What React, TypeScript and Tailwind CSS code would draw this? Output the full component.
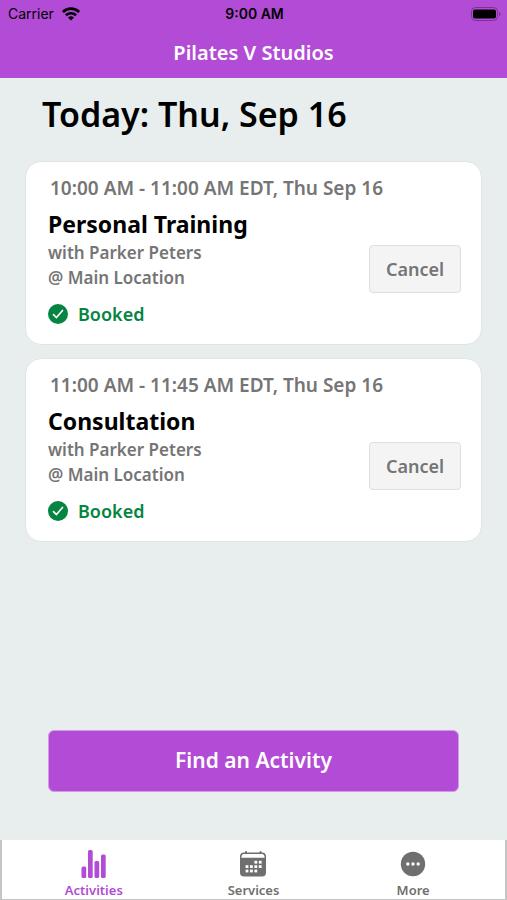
import React from 'react';

type Activity = {
  time: string;
  title: string;
  instructor: string;
  location: string;
};

const activities: Activity[] = [
  {
    time: '10:00 AM - 11:00 AM EDT, Thu Sep 16',
    title: 'Personal Training',
    instructor: 'Parker Peters',
    location: 'Main Location',
  },
  {
    time: '11:00 AM - 11:45 AM EDT, Thu Sep 16',
    title: 'Consultation',
    instructor: 'Parker Peters',
    location: 'Main Location',
  },
];

function WifiIcon() {
  return (
    <svg width="18" height="14" viewBox="0 0 18 14" fill="none" stroke="black" strokeWidth="2.6">
      <path d="M0.900 5a11.500 11.500 0 0 1 16.200 0" />
      <path d="M3.900 8.300a7.300 7.300 0 0 1 10.200 0" />
      <path d="M9 13.600 6 10.600a4.300 4.300 0 0 1 6 0Z" fill="black" stroke="none" />
    </svg>
  );
}

function BatteryIcon() {
  return (
    <svg width="30" height="14" viewBox="0 0 30 14">
      <rect x="0.5" y="0.5" width="26" height="13" rx="4" fill="none" stroke="#7b3291" />
      <rect x="2" y="2.5" width="23" height="9" rx="2" fill="black" />
      <path d="M28 5v4q1.6-.6 1.6-2T28 5Z" fill="#7b3291" />
    </svg>
  );
}

function CheckIcon() {
  return (
    <svg width="20" height="20" viewBox="0 0 20 20">
      <circle cx="10" cy="10" r="10" fill="#058541" />
      <path d="m5.5 10.6 3 3 6-7.2" fill="none" stroke="white" strokeWidth="1.6" strokeLinecap="round" strokeLinejoin="round" />
    </svg>
  );
}

function BarsIcon() {
  return (
    <svg width="28" height="28" viewBox="0 0 28 28" fill="currentColor">
      <rect x="1.500" y="16.500" width="4.700" height="11.500" rx="1.600" />
      <rect x="8" y="0" width="4.700" height="28" rx="1.600" />
      <rect x="14.500" y="11" width="4.700" height="17" rx="1.600" />
      <rect x="21" y="4.500" width="4.700" height="23.500" rx="1.600" />
    </svg>
  );
}

function CalendarIcon() {
  return (
    <svg width="28" height="28" viewBox="0 0 28 28" fill="currentColor">
      <rect x="6" y="1" width="2" height="4" rx="1" />
      <rect x="20.500" y="1" width="2" height="4" rx="1" />
      <path d="M5 2.500h18a4 4 0 0 1 4 4V22.500a4 4 0 0 1-4 4H5a4 4 0 0 1-4-4V6.500a4 4 0 0 1 4-4Z" />
      <path d="M5 4h18q2.500 0 2.700 3.800H2.300Q2.500 4 5 4Z" fill="white" />
      <g fill="white">
        <rect x="15.400" y="10.800" width="2.800" height="2.800" />
        <rect x="19.800" y="10.800" width="2.800" height="2.800" />
        <rect x="6.600" y="15.200" width="2.800" height="2.800" />
        <rect x="11" y="15.200" width="2.800" height="2.800" />
        <rect x="15.400" y="15.200" width="2.800" height="2.800" />
        <rect x="19.800" y="15.200" width="2.800" height="2.800" />
        <rect x="6.600" y="19.600" width="2.800" height="2.800" />
        <rect x="11" y="19.600" width="2.800" height="2.800" />
        <rect x="15.400" y="19.600" width="2.800" height="2.800" />
      </g>
    </svg>
  );
}

function MoreIcon() {
  return (
    <svg width="28" height="28" viewBox="0 0 28 28">
      <circle cx="14" cy="14" r="12.2" fill="currentColor" />
      <g fill="white">
        <circle cx="8.8" cy="14" r="1.7" />
        <circle cx="14" cy="14" r="1.7" />
        <circle cx="19.2" cy="14" r="1.7" />
      </g>
    </svg>
  );
}

function ActivityCard({ activity }: { activity: Activity }) {
  return (
    <article className="rounded-2xl border border-[#e0e4e4] bg-white pt-3.5 pr-5 pb-4.5 pl-[22px]">
      <p className="pl-0.5 text-[19px]/6 font-semibold text-[#757575]">{activity.time}</p>
      <div className="flex items-start justify-between">
        <div>
          <h2 className="mt-2 text-[23px]/8 font-bold text-black">{activity.title}</h2>
          <p className="text-[17px]/[25px] font-semibold text-[#757575]">with {activity.instructor}</p>
          <p className="text-[17px]/[25px] font-semibold text-[#757575]">@ {activity.location}</p>
          <p className="mt-3 flex items-center gap-2.5 text-lg/6 font-semibold text-[#058541]">
            <CheckIcon />
            Booked
          </p>
        </div>
        <button type="button" className="mt-[45px] h-12 w-[92px] rounded border border-[#dedede] bg-[#f4f4f4] text-lg font-semibold text-[#757575]">
          Cancel
        </button>
      </div>
    </article>
  );
}

export default function App() {
  return (
    <div className="flex min-h-screen flex-col bg-[#e8eeee] font-['Noto_Sans',sans-serif]">
      <header className="bg-[#b24bd5]">
        {/* Status bar */}
        <div className="grid h-7 grid-cols-3 items-center pr-1.5 pl-2 font-['Inter',sans-serif] text-sm text-black">
          <div className="flex items-center gap-2">
            Carrier
            <WifiIcon />
          </div>
          <div className="text-center font-semibold">9:00 AM</div>
          <div className="flex justify-end">
            <BatteryIcon />
          </div>
        </div>
        <div className="flex h-[50px] items-center justify-center text-xl font-semibold text-white">Pilates V Studios</div>
      </header>

      <main className="flex grow flex-col">
        <h1 className="mt-3 px-[42px] text-[34px]/12 font-semibold text-black">Today: Thu, Sep 16</h1>
        <div className="mt-[23px] flex flex-col gap-[13px] px-[25px]">
          {activities.map((activity) => (
            <ActivityCard key={activity.title} activity={activity} />
          ))}
        </div>
        <div className="mt-auto px-12 pt-6 pb-12">
          <button type="button" className="h-[62px] w-full rounded-md border border-[#d49ae8] bg-[#b24bd5] text-[21px] font-semibold text-white">
            Find an Activity
          </button>
        </div>
      </main>

      <nav className="grid h-[60px] grid-cols-3 border-x-2 border-b border-[#c4c6c6] bg-white px-3 text-[13px]/4 font-semibold text-[#6f6f6f]">
        <a href="#activities" className="flex flex-col items-center gap-1 pt-2.5 text-[#b24bd5]">
          <BarsIcon />
          Activities
        </a>
        <a href="#services" className="flex flex-col items-center gap-1 pt-2.5">
          <CalendarIcon />
          Services
        </a>
        <a href="#more" className="flex flex-col items-center gap-1 pt-2.5">
          <MoreIcon />
          More
        </a>
      </nav>
    </div>
  );
}
